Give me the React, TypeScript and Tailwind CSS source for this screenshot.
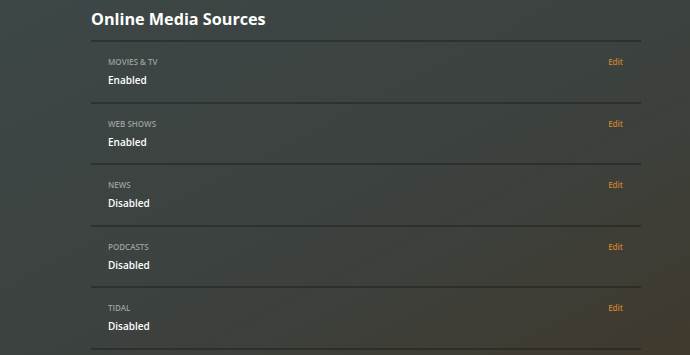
const sources = [
  { name: "Movies & TV", status: "Enabled" },
  { name: "Web Shows", status: "Enabled" },
  { name: "News", status: "Disabled" },
  { name: "Podcasts", status: "Disabled" },
  { name: "Tidal", status: "Disabled" },
];

export default function App() {
  return (
    <main
      className="w-[690px] h-[355px] overflow-hidden bg-gradient-to-br from-[#3d4747] via-[#3c413e] via-60% to-[#40392d] text-white"
      style={{ fontFamily: '"Open Sans", sans-serif' }}
    >
      <div className="w-[550px] ml-[91px]">
        <h1 className="h-[40px] pt-[7px] text-[16.2px] font-bold leading-[24px]">
          Online Media Sources
        </h1>

        {sources.map((s) => (
          <div
            key={s.name}
            className="h-[61.6px] border-t-2 border-black/25 pl-[17px] pr-[18px] pt-[14px] flex justify-between"
          >
            <div>
              <div className="text-[8px] font-semibold uppercase leading-[12px] text-[#9c9f9d]">
                {s.name}
              </div>
              <div className="mt-[5px] text-[10px] font-semibold leading-[14px] text-white">
                {s.status}
              </div>
            </div>
            <button className="self-start text-[8px] leading-[12px] font-semibold text-[#c9802e]">
              Edit
            </button>
          </div>
        ))}
        <div className="border-t-2 border-black/25"></div>
      </div>
    </main>
  );
}
